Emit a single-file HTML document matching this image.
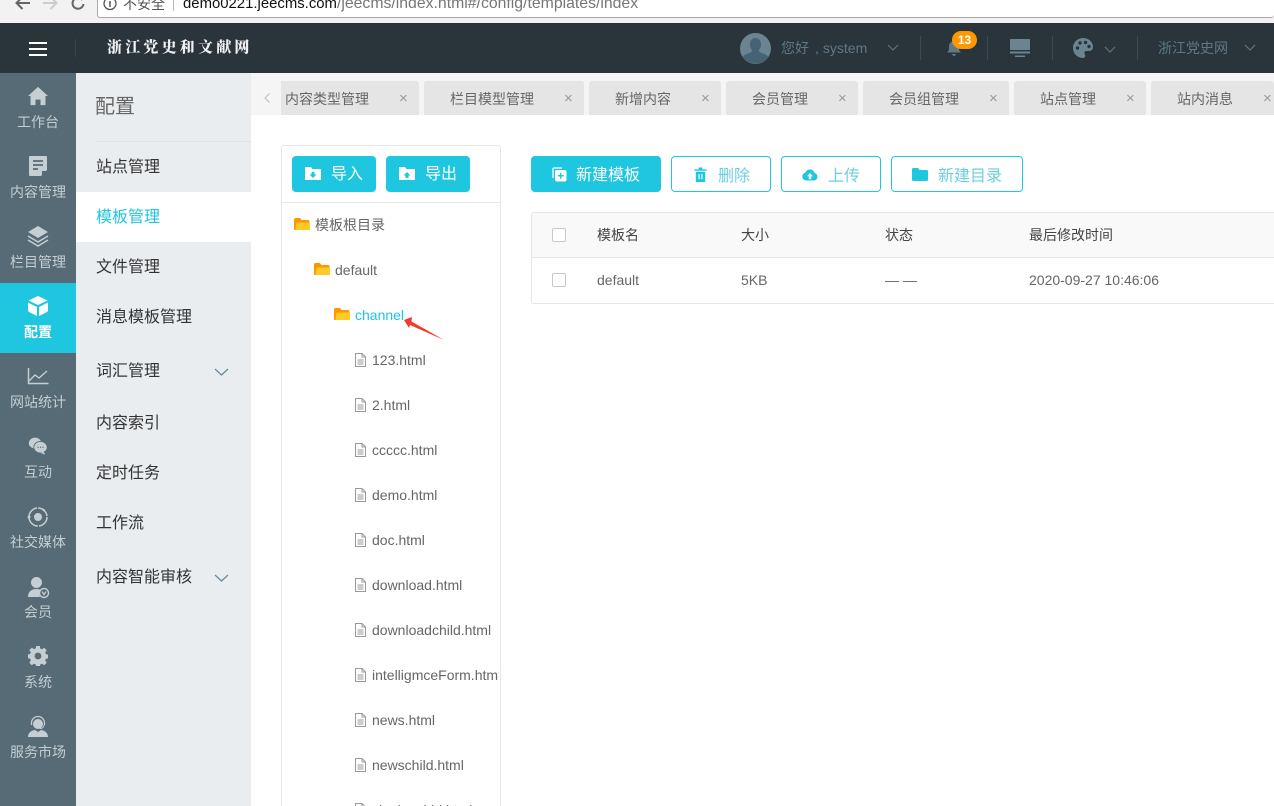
<!DOCTYPE html>
<html lang="zh">
<head>
<meta charset="utf-8">
<title>模板管理</title>
<style>
html,body{margin:0;padding:0;background:#fff;overflow:hidden;width:1274px;height:806px}
#w{position:absolute;left:0;top:0;width:1274px;height:806px;overflow:hidden;font-family:"Liberation Sans","Noto Sans CJK SC",sans-serif;color:#666}
.a{position:absolute}
.t{position:absolute;white-space:nowrap;line-height:20px}
svg{position:absolute;display:block}
.nav{position:absolute;left:0;width:76px;height:70px;color:#c5ced3;font-size:14px;text-align:center}
.nav span{position:absolute;left:0;width:76px;top:40px;line-height:18px;white-space:nowrap}
.nav svg{left:26px;top:12px}
.m{position:absolute;left:96px;font-size:16px;line-height:22px;color:#333;white-space:nowrap}
.tab{position:absolute;top:81px;height:34px;background:#e5e5e5;border-radius:3px 3px 0 0;font-size:14px;color:#666;line-height:36px;white-space:nowrap;text-indent:26px}
.tab i{position:absolute;top:0;font-style:normal;font-size:15px;color:#999;text-indent:0}
.btn{position:absolute;top:156px;height:36px;border-radius:4px;box-sizing:border-box;font-size:16px;line-height:38px;white-space:nowrap}
.p{background:#1ec6df;color:#fff}
.o{border:1px solid #1ec6df;color:#6ccfdf;line-height:39px;background:#fff}
.tree{position:absolute;font-size:14px;line-height:20px;color:#666;white-space:nowrap}
.cb{position:absolute;left:552px;width:12px;height:12px;border:1px solid #c8c8c8;border-radius:2px;background:#fff}
.th{position:absolute;top:225px;font-size:14px;line-height:20px;color:#444;white-space:nowrap}
.td{position:absolute;top:270px;font-size:14px;line-height:20px;color:#666;white-space:nowrap}
</style>
</head>
<body>
<div id="w">
<!-- browser bar -->
<div class="a" style="left:0;top:0;width:1274px;height:23px;background:#f2f2f2"></div>
<div class="a" style="left:97px;top:-6px;width:1177px;height:24px;background:#fff;border:1px solid #a9a9a9;border-right:0;border-radius:3px;box-sizing:border-box"></div>
<svg style="left:15px;top:0" width="15" height="11" viewBox="0 0 15 11"><path d="M15 3H2M7.500 -3 1.500 3l6 6" fill="none" stroke="#666" stroke-width="2"/></svg>
<svg style="left:43px;top:0" width="15" height="11" viewBox="0 0 15 11"><path d="M0 3h13M7.500 -3l6 6-6 6" fill="none" stroke="#ccc" stroke-width="2"/></svg>
<svg style="left:71px;top:0" width="15" height="11" viewBox="0 0 15 11"><path d="M12.500 5a5.500 5.500 0 1 1-1-4" transform="translate(0,-1)" fill="none" stroke="#666" stroke-width="2"/></svg>
<svg style="left:103px;top:0" width="14" height="11" viewBox="0 0 14 11"><circle cx="7" cy="3.500" r="6" fill="none" stroke="#555" stroke-width="1.300"/><path d="M7 1v6" stroke="#555" stroke-width="1.500"/></svg>
<div class="t" style="left:123px;top:-6px;font-size:14px;color:#555">不安全</div>
<div class="a" style="left:173px;top:0;width:1px;height:11px;background:#bbb"></div>
<div class="t" style="left:183px;top:-6px;color:#777;font-size:15.8px"><span style="color:#111;font-size:14.9px">demo0221.jeecms.com</span>/jeecms/index.html#/config/templates/index</div>

<!-- header -->
<div class="a" style="left:0;top:23px;width:1274px;height:50px;background:#29343b"></div>
<div class="a" style="left:29px;top:42px;width:18px;height:2px;background:#fff"></div>
<div class="a" style="left:29px;top:48px;width:18px;height:2px;background:#fff"></div>
<div class="a" style="left:29px;top:54px;width:18px;height:2px;background:#fff"></div>
<div class="a" style="left:75px;top:39px;width:1px;height:18px;background:#36434b"></div>
<div class="t" style="left:107px;top:37px;font-family:'Noto Serif CJK SC',serif;font-weight:900;font-size:15px;letter-spacing:3.2px;color:#eef0f1">浙江党史和文献网</div>

<svg style="left:740px;top:33px" width="31" height="31" viewBox="0 0 31 31"><ellipse cx="15.500" cy="15.500" rx="15.500" ry="15.500" fill="#6b8492"/><path d="M15.500 5c3.400 0 5.500 2.600 5.500 6.200 0 2.800-1 4.800-2.200 6 .2 1.600 1.600 2.300 4 3.200 2.600 1 4.700 2 5.500 3.500a15.500 15.500 0 0 1-25.600 0c.8-1.500 2.900-2.500 5.500-3.500 2.400-.9 3.800-1.600 4-3.200-1.200-1.200-2.200-3.200-2.200-6C10 7.600 12.100 5 15.500 5z" fill="#466373"/></svg>
<div class="t" style="left:781px;top:38px;font-size:14px;color:#5f7986">您好<span style="margin-left:6px">,</span><span style="margin-left:4px">system</span></div>
<svg style="left:887px;top:44px" width="12" height="8" viewBox="0 0 12 8"><path d="M1 1l5 5 5-5" fill="none" stroke="#5f7986" stroke-width="1.100"/></svg>
<div class="a" style="left:920px;top:36px;width:1px;height:24px;background:#3b4952"></div>
<svg style="left:946px;top:40px" width="16" height="17" viewBox="0 0 16 17"><path d="M8 0c1 0 1.500.6 1.500 1.400C12 2.200 13 4.200 13 7v3l2 2.500H1L3 10V7c0-2.800 1-4.800 3.500-5.600C6.500.6 7 0 8 0z" fill="#5f7986"/><path d="M5.500 14h5L8 16.500z" fill="#5f7986"/></svg>
<div class="a" style="left:952px;top:31px;width:25px;height:18px;border-radius:9px;background:#ff9800;color:#fff;font-size:12px;font-weight:700;line-height:18px;text-align:center">13</div>
<div class="a" style="left:987px;top:36px;width:1px;height:24px;background:#3b4952"></div>
<svg style="left:1010px;top:39px" width="20" height="18" viewBox="0 0 20 18"><path d="M0 0h20v11H0z" fill="#6b8492"/><path d="M0 12.500h20v2H0z" fill="#6b8492"/><path d="M5 16.500h10V18H5z" fill="#6b8492"/></svg>
<div class="a" style="left:1052px;top:36px;width:1px;height:24px;background:#3b4952"></div>
<svg style="left:1073px;top:38px" width="20" height="20" viewBox="0 0 20 20"><path d="M10 0C4.500 0 0 4.500 0 10s4.500 10 10 10c1.500 0 2.300-1 2.300-2.200 0-1.500-1-1.800-1-3 0-1.200 1-1.800 2.200-1.800H16c2.500 0 4-1.700 4-4C20 3.800 15.500 0 10 0z" fill="#6b8492"/><circle cx="4.500" cy="10" r="1.700" fill="#29343b"/><circle cx="7" cy="5" r="1.700" fill="#29343b"/><circle cx="12.500" cy="4.500" r="1.700" fill="#29343b"/><circle cx="16" cy="8.500" r="1.700" fill="#29343b"/></svg>
<svg style="left:1104px;top:46px" width="12" height="8" viewBox="0 0 12 8"><path d="M1 1l5 5 5-5" fill="none" stroke="#5f7986" stroke-width="1.100"/></svg>
<div class="a" style="left:1137px;top:36px;width:1px;height:24px;background:#3b4952"></div>
<div class="t" style="left:1158px;top:38px;font-size:14px;color:#5f7986">浙江党史网</div>
<svg style="left:1244px;top:44px" width="12" height="8" viewBox="0 0 12 8"><path d="M1 1l5 5 5-5" fill="none" stroke="#5f7986" stroke-width="1.100"/></svg>

<!-- left nav -->
<div class="a" style="left:0;top:73px;width:76px;height:733px;background:#566b76"></div>
<div class="nav" style="top:73px"><svg style="top:12px" width="24" height="22" preserveAspectRatio="none" viewBox="0 0 24 24"><path d="M12 2 2 12h2.500v10h5v-6h5v6h5V12H22z" fill="#c5ced3"/></svg><span>工作台</span></div>
<div class="nav" style="top:143px"><svg style="top:11px" width="24" height="24" viewBox="0 0 24 24"><path d="M4 2h16a1 1 0 0 1 1 1v13l-6 6H4a1 1 0 0 1-1-1V3a1 1 0 0 1 1-1z" fill="#c5ced3"/><path d="M7 7h10M7 11h10M7 15h5" stroke="#566b76" stroke-width="1.800"/><path d="M16 22l5-5h-5z" fill="#566b76"/></svg><span>内容管理</span></div>
<div class="nav" style="top:213px"><svg style="top:11px" width="24" height="24" viewBox="0 0 24 24"><path d="M12 2 22 8l-10 6L2 8z" fill="#c5ced3"/><path d="M2 12l10 6 10-6M2 16l10 6 10-6" fill="none" stroke="#c5ced3" stroke-width="1.400"/></svg><span>栏目管理</span></div>
<div class="nav" style="top:283px;background:#1ec6df;color:#fff"><svg style="top:11px" width="24" height="24" viewBox="0 0 24 24"><path d="M12 2 21.500 6.500 12 11 2.500 6.500z" fill="#fff"/><path d="M2 8.500 11 13v9L3 18a2 2 0 0 1-1-2zM22 8.500 13 13v9l8-4a2 2 0 0 0 1-2z" fill="#fff"/></svg><span style="font-weight:700">配置</span></div>
<div class="nav" style="top:353px"><svg style="left:25px;top:12px" width="24" height="22" viewBox="0 0 24 22"><path d="M3.500 3v15.500H23.500" fill="none" stroke="#c5ced3" stroke-width="1.500"/><path d="M4 16l6-6 4 3 8-7" fill="none" stroke="#c5ced3" stroke-width="1.400"/></svg><span>网站统计</span></div>
<div class="nav" style="top:423px"><svg style="left:28px;top:13px" width="20" height="20" viewBox="0 0 24 24"><ellipse cx="8.500" cy="8.500" rx="7.500" ry="6.500" fill="#c5ced3"/><ellipse cx="15" cy="13.500" rx="8" ry="7" fill="#c5ced3" stroke="#566b76"/><path d="M19 19l1.500 3.500-5-2z" fill="#c5ced3"/><circle cx="12" cy="13.500" r=".8" fill="#566b76"/><circle cx="15" cy="13.500" r=".8" fill="#566b76"/><circle cx="18" cy="13.500" r=".8" fill="#566b76"/></svg><span>互动</span></div>
<div class="nav" style="top:493px"><svg width="24" height="24" viewBox="0 0 24 24"><circle cx="12" cy="12" r="9" fill="none" stroke="#c5ced3" stroke-width="1.500" stroke-dasharray="13 1.100"/><circle cx="12" cy="12" r="4" fill="#c5ced3"/><circle cx="3" cy="12" r="1.500" fill="#c5ced3"/><circle cx="17.500" cy="5" r="1.200" fill="#c5ced3"/></svg><span>社交媒体</span></div>
<div class="nav" style="top:563px"><svg width="24" height="24" viewBox="0 0 24 24"><circle cx="10.500" cy="7.500" r="5.500" fill="#c5ced3"/><path d="M2 22c0-5 3-8 8.500-8 2 0 3 .4 4 1a6 6 0 0 0-.5 7z" fill="#c5ced3"/><circle cx="18" cy="18" r="4.500" fill="none" stroke="#c5ced3" stroke-width="1.400"/><path d="M16 16.500l2 3.200 2-3.200" fill="none" stroke="#c5ced3" stroke-width="1.200"/></svg><span>会员</span></div>
<div class="nav" style="top:633px"><svg style="left:28px;top:13px" width="20" height="20" viewBox="0 0 20 20"><path d="M8.200 0h3.600l.5 2.600 1.700.7 2.200-1.500 2.500 2.500-1.500 2.200.7 1.700 2.600.5v3.600l-2.600.5-.7 1.700 1.500 2.200-2.500 2.500-2.200-1.500-1.700.7-.5 2.600H8.200l-.5-2.600-1.700-.7-2.200 1.500-2.500-2.500 1.500-2.200-.7-1.700L-.5 12V8.500l2.600-.5.7-1.700-1.500-2.200 2.500-2.500 2.200 1.500 1.700-.7z" fill="#c5ced3"/><circle cx="10" cy="10" r="3.400" fill="#566b76"/></svg><span>系统</span></div>
<div class="nav" style="top:703px"><svg width="24" height="24" viewBox="0 0 24 24"><circle cx="12" cy="9" r="5" fill="#c5ced3"/><path d="M5.500 10V8a6.500 6.500 0 0 1 13 0v2" fill="none" stroke="#c5ced3" stroke-width="1.300"/><path d="M18 10c0 2-1.500 3.500-4 3.500" fill="none" stroke="#c5ced3"/><path d="M2 22c0-4 3-6.500 7-7l3 2 3-2c4 .5 7 3 7 7z" fill="#c5ced3"/></svg><span>服务市场</span></div>

<!-- second nav -->
<div class="a" style="left:76px;top:73px;width:175px;height:733px;background:#e9edf0"></div>
<div class="t" style="left:95px;top:97px;font-size:20px;color:#666">配置</div>
<div class="a" style="left:95px;top:141px;width:156px;height:1px;background:#dde2e6"></div>
<div class="m" style="top:157px">站点管理</div>
<div class="a" style="left:76px;top:192px;width:175px;height:50px;background:#fff"></div>
<div class="m" style="top:207px;color:#1ec6df">模板管理</div>
<div class="m" style="top:257px">文件管理</div>
<div class="m" style="top:307px">消息模板管理</div>
<div class="m" style="top:361px">词汇管理</div>
<svg style="left:214px;top:368px" width="15" height="8" viewBox="0 0 15 8"><path d="M1 1l6.500 6L14 1" fill="none" stroke="#6a8a9a" stroke-width="1.300"/></svg>
<div class="m" style="top:413px">内容索引</div>
<div class="m" style="top:463px">定时任务</div>
<div class="m" style="top:513px">工作流</div>
<div class="m" style="top:567px">内容智能审核</div>
<svg style="left:214px;top:574px" width="15" height="8" viewBox="0 0 15 8"><path d="M1 1l6.500 6L14 1" fill="none" stroke="#6a8a9a" stroke-width="1.300"/></svg>

<!-- tab bar -->
<div class="a" style="left:251px;top:73px;width:1023px;height:42px;background:#f5f5f5"></div>
<svg style="left:264px;top:93px" width="6" height="10" viewBox="0 0 6 10"><path d="M5.500.5 1 5l4.500 4.500" fill="none" stroke="#bbb" stroke-width="1"/></svg>
<div class="tab" style="left:281px;width:138px;text-indent:4px;border-radius:0 3px 0 0">内容类型管理<i style="left:118px">×</i></div>
<div class="tab" style="left:424px;width:160px">栏目模型管理<i style="left:140px">×</i></div>
<div class="tab" style="left:589px;width:132px">新增内容<i style="left:112px">×</i></div>
<div class="tab" style="left:726px;width:132px">会员管理<i style="left:112px">×</i></div>
<div class="tab" style="left:863px;width:146px">会员组管理<i style="left:126px">×</i></div>
<div class="tab" style="left:1014px;width:132px">站点管理<i style="left:112px">×</i></div>
<div class="tab" style="left:1151px;width:123px">站内消息<i style="left:112px">×</i></div>

<!-- tree panel -->
<div class="a" style="left:281px;top:145px;width:220px;height:680px;box-sizing:border-box;border:1px solid #e6e6e6;border-radius:3px"></div>
<div class="a" style="left:282px;top:202px;width:218px;height:1px;background:#e6e6e6"></div>
<div class="btn p" style="left:292px;width:84px;text-indent:39px">导入</div>
<svg style="left:305px;top:166px" width="16" height="14" viewBox="0 0 16 14"><path d="M0 1h6l1.500 2H16v11H0z" fill="#fff"/><path d="M6.500 6h3v2.500h2L8 12 4.500 8.500h2z" fill="#1ec6df"/></svg>
<div class="btn p" style="left:386px;width:84px;text-indent:39px">导出</div>
<svg style="left:399px;top:166px" width="16" height="14" viewBox="0 0 16 14"><path d="M0 1h6l1.500 2H16v11H0z" fill="#fff"/><path d="M6.500 12h3V9.500h2L8 6 4.500 9.500h2z" fill="#1ec6df"/></svg>

<svg style="left:294px;top:218px" width="16" height="13" viewBox="0 0 16 13"><path d="M0 1.500A1.500 1.500 0 0 1 1.500 0H6l1.500 2H14a1.500 1.500 0 0 1 1.500 1.500V12H0z" fill="#ff9800"/><path d="M2.500 4.500H16V12H1.500z" fill="#ffca28"/></svg>
<div class="tree" style="left:315px;top:215px">模板根目录</div>
<svg style="left:314px;top:263px" width="16" height="13" viewBox="0 0 16 13"><path d="M0 1.500A1.500 1.500 0 0 1 1.500 0H6l1.500 2H14a1.500 1.500 0 0 1 1.500 1.500V12H0z" fill="#ff9800"/><path d="M2.500 4.500H16V12H1.500z" fill="#ffca28"/></svg>
<div class="tree" style="left:335px;top:260px">default</div>
<svg style="left:334px;top:308px" width="16" height="13" viewBox="0 0 16 13"><path d="M0 1.500A1.500 1.500 0 0 1 1.500 0H6l1.500 2H14a1.500 1.500 0 0 1 1.500 1.500V12H0z" fill="#ff9800"/><path d="M2.500 4.500H16V12H1.500z" fill="#ffca28"/></svg>
<div class="tree" style="left:355px;top:305px;color:#1ec6df">channel</div>
<svg style="left:400px;top:316px" width="46" height="26" viewBox="0 0 46 26"><path d="M4 4 12 1 11.500 5.500 44 24 10 9 9 12z" fill="#f4392f"/></svg>

<svg style="left:355px;top:353px" width="11" height="14" viewBox="0 0 11 14"><path d="M.5.500h6.500l3.500 3.500v9.500H.5zM7 .5V4h3.500M2.500 7h6M2.500 9h6M2.500 11h6" fill="none" stroke="#999"/></svg>
<div class="tree" style="left:372px;top:350px">123.html</div>
<svg style="left:355px;top:398px" width="11" height="14" viewBox="0 0 11 14"><path d="M.5.500h6.500l3.500 3.500v9.500H.5zM7 .5V4h3.500M2.500 7h6M2.500 9h6M2.500 11h6" fill="none" stroke="#999"/></svg>
<div class="tree" style="left:372px;top:395px">2.html</div>
<svg style="left:355px;top:443px" width="11" height="14" viewBox="0 0 11 14"><path d="M.5.500h6.500l3.500 3.500v9.500H.5zM7 .5V4h3.500M2.500 7h6M2.500 9h6M2.500 11h6" fill="none" stroke="#999"/></svg>
<div class="tree" style="left:372px;top:440px">ccccc.html</div>
<svg style="left:355px;top:488px" width="11" height="14" viewBox="0 0 11 14"><path d="M.5.500h6.500l3.500 3.500v9.500H.5zM7 .5V4h3.500M2.500 7h6M2.500 9h6M2.500 11h6" fill="none" stroke="#999"/></svg>
<div class="tree" style="left:372px;top:485px">demo.html</div>
<svg style="left:355px;top:533px" width="11" height="14" viewBox="0 0 11 14"><path d="M.5.500h6.500l3.500 3.500v9.500H.5zM7 .5V4h3.500M2.500 7h6M2.500 9h6M2.500 11h6" fill="none" stroke="#999"/></svg>
<div class="tree" style="left:372px;top:530px">doc.html</div>
<svg style="left:355px;top:578px" width="11" height="14" viewBox="0 0 11 14"><path d="M.5.500h6.500l3.500 3.500v9.500H.5zM7 .5V4h3.500M2.500 7h6M2.500 9h6M2.500 11h6" fill="none" stroke="#999"/></svg>
<div class="tree" style="left:372px;top:575px">download.html</div>
<svg style="left:355px;top:623px" width="11" height="14" viewBox="0 0 11 14"><path d="M.5.500h6.500l3.500 3.500v9.500H.5zM7 .5V4h3.500M2.500 7h6M2.500 9h6M2.500 11h6" fill="none" stroke="#999"/></svg>
<div class="tree" style="left:372px;top:620px">downloadchild.html</div>
<svg style="left:355px;top:668px" width="11" height="14" viewBox="0 0 11 14"><path d="M.5.500h6.500l3.500 3.500v9.500H.5zM7 .5V4h3.500M2.500 7h6M2.500 9h6M2.500 11h6" fill="none" stroke="#999"/></svg>
<div class="tree" style="left:372px;top:665px;width:127px;overflow:hidden">intelligmceForm.html</div>
<svg style="left:355px;top:713px" width="11" height="14" viewBox="0 0 11 14"><path d="M.5.500h6.500l3.500 3.500v9.500H.5zM7 .5V4h3.500M2.500 7h6M2.500 9h6M2.500 11h6" fill="none" stroke="#999"/></svg>
<div class="tree" style="left:372px;top:710px">news.html</div>
<svg style="left:355px;top:758px" width="11" height="14" viewBox="0 0 11 14"><path d="M.5.500h6.500l3.500 3.500v9.500H.5zM7 .5V4h3.500M2.500 7h6M2.500 9h6M2.500 11h6" fill="none" stroke="#999"/></svg>
<div class="tree" style="left:372px;top:755px">newschild.html</div>
<svg style="left:355px;top:803px" width="11" height="14" viewBox="0 0 11 14"><path d="M.5.500h6.500l3.500 3.500v9.500H.5zM7 .5V4h3.500M2.500 7h6M2.500 9h6M2.500 11h6" fill="none" stroke="#999"/></svg>
<div class="tree" style="left:372px;top:800px">singleachid.html</div>

<!-- toolbar -->
<div class="btn p" style="left:531px;width:130px;text-indent:45px;line-height:39px">新建模板</div>
<svg style="left:552px;top:167px" width="15" height="15" viewBox="0 0 15 15"><path d="M1 11V2a1 1 0 0 1 1-1h8" fill="none" stroke="#fff" stroke-width="1.300"/><rect x="3" y="3" width="11.500" height="11.500" rx="2" fill="#fff"/><path d="M8.750 5.800v6M5.800 8.750h6" stroke="#1ec6df" stroke-width="1.400"/></svg>
<div class="btn o" style="left:671px;width:100px;text-indent:46px">删除</div>
<svg style="left:694px;top:167px" width="13" height="15" viewBox="0 0 13 16"><path d="M0 2.500h13V4H0zM4.500.5h4v2h-4z" fill="#1ec6df"/><path d="M1.500 5h10v11h-10z" fill="#1ec6df"/><path d="M5 7.500v5.500M8 7.500v5.500" stroke="#fff" stroke-width="1.200"/></svg>
<div class="btn o" style="left:781px;width:100px;text-indent:46px">上传</div>
<svg style="left:802px;top:168px" width="16" height="13" viewBox="0 0 16 13"><path d="M4 12.500a4 4 0 0 1-.6-7.900A4.800 4.800 0 0 1 12.500 5 3.800 3.800 0 0 1 12 12.500z" fill="#1ec6df"/><path d="M8 5l3 3.300H9.200v3H6.800v-3H5z" fill="#fff"/></svg>
<div class="btn o" style="left:891px;width:132px;text-indent:46px">新建目录</div>
<svg style="left:912px;top:168px" width="16" height="13" viewBox="0 0 16 13"><path d="M0 1.500A1.500 1.500 0 0 1 1.500 0H6l1.500 2H14.500A1.500 1.500 0 0 1 16 3.500V11.500A1.500 1.500 0 0 1 14.500 13H1.500A1.500 1.500 0 0 1 0 11.500z" fill="#1ec6df"/></svg>

<!-- table -->
<div class="a" style="left:531px;top:212px;width:743px;height:92px;box-sizing:border-box;border:1px solid #e6e6e6;border-right:0;border-radius:3px 0 0 3px;background:#fff"></div>
<div class="a" style="left:532px;top:213px;width:742px;height:44px;background:#f9f9f9"></div>
<div class="a" style="left:532px;top:257px;width:742px;height:1px;background:#e6e6e6"></div>
<div class="cb" style="top:228px"></div>
<div class="th" style="left:597px">模板名</div>
<div class="th" style="left:741px">大小</div>
<div class="th" style="left:885px">状态</div>
<div class="th" style="left:1029px">最后修改时间</div>
<div class="cb" style="top:273px"></div>
<div class="td" style="left:597px">default</div>
<div class="td" style="left:741px">5KB</div>
<div class="td" style="left:885px">— —</div>
<div class="td" style="left:1029px">2020-09-27 10:46:06</div>
</div>
</body>
</html>
